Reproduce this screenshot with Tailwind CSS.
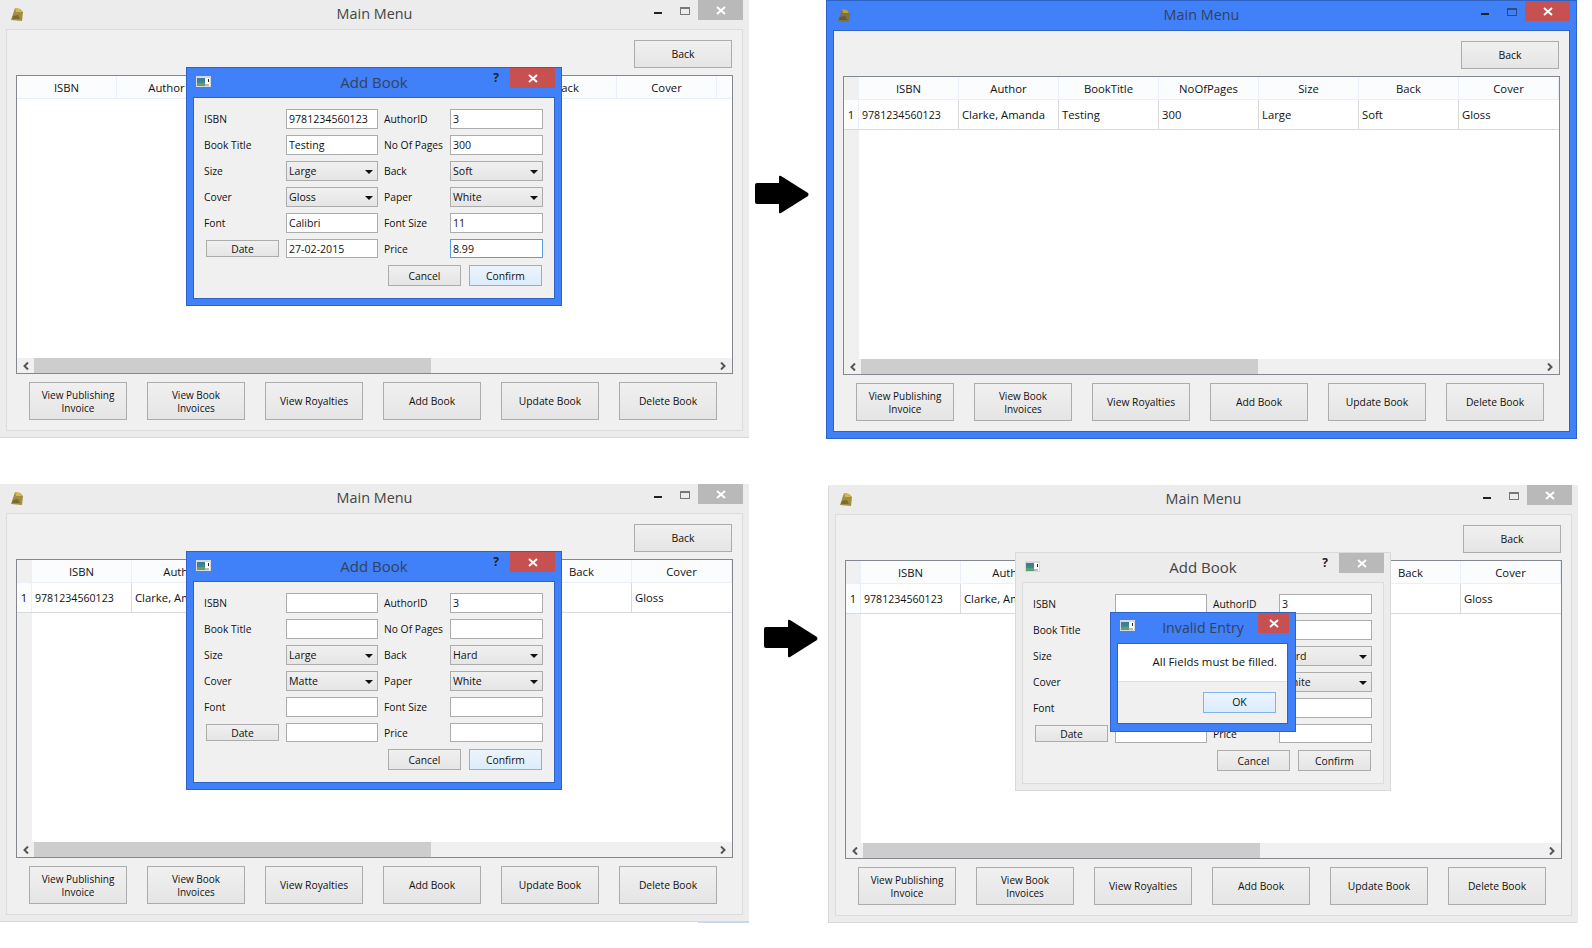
<!DOCTYPE html>
<html lang="en">
<head>
<meta charset="utf-8">
<title>Main Menu</title>
<script src="https://cdn.jsdelivr.net/npm/@tailwindcss/browser@4"></script>
</head>
<body class="bg-white">
<div class="relative w-[1592px] h-[948px] overflow-hidden font-['Open_Sans',sans-serif] text-[10.5px] text-[#111]">

<!-- WINDOW 1 -->
<div class="absolute left-0 top-0 w-[749px] h-[437px] bg-[#ececec] shadow-[0_1px_0_#d9d9d9]">
  <div class="relative h-[29px] flex items-start">
    <svg class="ml-[11px] mt-[8px]" width="12" height="13" viewBox="0 0 12 13"><polygon points="4,0 9,1 12,4 11,13 0,12 2,6" fill="#a38d40"/><polygon points="4,0 9,1 11,4 5,4" fill="#d4b84a"/><polygon points="2,8 7,7 9,11 1,11" fill="#7d6a30"/></svg>
    <div class="absolute inset-x-0 top-[3px] text-center text-[14.4px] text-[#444]">Main Menu</div>
    <div class="ml-auto mr-[6px] flex items-start">
      <div class="w-[8px] h-[2px] mt-[12px] bg-[#222]"></div>
      <div class="w-[10px] h-[8px] mt-[7px] ml-[18px] border border-[#777] border-t-2"></div>
      <div class="w-[45px] h-[20px] ml-[8px] bg-[#b9b9b9] flex items-center justify-center"><svg width="10" height="9" viewBox="0 0 10 9"><path d="M1 1l8 7M9 1l-8 7" stroke="#fff" stroke-width="2"/></svg></div>
    </div>
  </div>
  <div class="ml-[6px] w-[737px] h-[402px] border border-[#dcdcdc] bg-[#f0f0f0] flex flex-col pt-[10px]">
    <div class="flex justify-end pr-[10px]"><button class="w-[98px] h-[28px] pt-[2px] border border-[#acacac] bg-linear-to-b from-[#f0f0f0] to-[#e5e5e5]">Back</button></div>
    <div class="mx-[9px] mt-[7px] h-[299px] border border-[#828790] bg-white flex flex-col text-[11.3px]">
      <div class="h-[23px] flex bg-[#fbfcfe] border-b border-[#e9f0fb]">
        <div class="w-[100px] pt-[2px] border-r border-[#e9f0fb] flex items-center justify-center">ISBN</div>
        <div class="w-[100px] pt-[2px] border-r border-[#e9f0fb] flex items-center justify-center">Author</div>
        <div class="w-[100px] pt-[2px] border-r border-[#e9f0fb] flex items-center justify-center">BookTitle</div>
        <div class="w-[100px] pt-[2px] border-r border-[#e9f0fb] flex items-center justify-center">NoOfPages</div>
        <div class="w-[100px] pt-[2px] border-r border-[#e9f0fb] flex items-center justify-center">Size</div>
        <div class="w-[100px] pt-[2px] border-r border-[#e9f0fb] flex items-center justify-center">Back</div>
        <div class="w-[100px] pt-[2px] border-r border-[#e9f0fb] flex items-center justify-center">Cover</div>
      </div>
      <div class="flex-1"></div>
      <div class="h-[15px] flex bg-[#f0f0f0]">
        <div class="w-[17px] flex items-center justify-center"><svg width="6" height="8" viewBox="0 0 6 8"><path d="M5 0.5L1.5 4L5 7.5" fill="none" stroke="#555" stroke-width="2"/></svg></div>
        <div class="w-[397px] bg-[#cdcdcd]"></div>
        <div class="flex-1 flex items-center justify-end pr-[6px]"><svg width="6" height="8" viewBox="0 0 6 8"><path d="M1 0.5L4.500 4L1 7.5" fill="none" stroke="#555" stroke-width="2"/></svg></div>
      </div>
    </div>
    <div class="mt-[8px] pl-[22px] flex gap-[20px] text-[10.3px] [&>button]:pt-[2px]">
      <button class="w-[98px] h-[38px] text-[10px] leading-[13px] border border-[#acacac] bg-linear-to-b from-[#f0f0f0] to-[#e5e5e5]">View Publishing<br>Invoice</button>
      <button class="w-[98px] h-[38px] text-[10px] leading-[13px] border border-[#acacac] bg-linear-to-b from-[#f0f0f0] to-[#e5e5e5]">View Book<br>Invoices</button>
      <button class="w-[98px] h-[38px] border border-[#acacac] bg-linear-to-b from-[#f0f0f0] to-[#e5e5e5]">View Royalties</button>
      <button class="w-[98px] h-[38px] border border-[#acacac] bg-linear-to-b from-[#f0f0f0] to-[#e5e5e5]">Add Book</button>
      <button class="w-[98px] h-[38px] border border-[#acacac] bg-linear-to-b from-[#f0f0f0] to-[#e5e5e5]">Update Book</button>
      <button class="w-[98px] h-[38px] border border-[#acacac] bg-linear-to-b from-[#f0f0f0] to-[#e5e5e5]">Delete Book</button>
    </div>
  </div>
  <!-- dialog -->
  <div class="absolute left-[186px] top-[67px] w-[376px] h-[239px] bg-[#4080f8] border border-[#2e62c4]">
    <div class="relative h-[29px] flex items-start">
      <svg class="ml-[9px] mt-[8px]" width="15" height="11" viewBox="0 0 15 11"><rect width="15" height="11" fill="#d8d8d8"/><rect x="1" y="2" width="13" height="8" fill="#fff"/><rect x="1" y="2" width="8" height="3" fill="#3a7f95"/><rect x="1" y="5" width="8" height="2" fill="#3f8a86"/><rect x="1" y="7" width="8" height="3" fill="#5f9f78"/><rect x="12" y="3" width="1" height="3" fill="#222"/><rect x="9" y="8" width="4" height="2" fill="#bbb"/></svg>
      <div class="absolute inset-x-0 top-[3px] text-center text-[15px] text-[#33435c]">Add Book</div>
      <div class="ml-auto mr-[6px] flex items-start">
        <div class="mr-[11px] mt-[1px] text-[12px] font-bold text-[#222]">?</div>
        <div class="w-[45px] h-[20px] bg-[#c75050] flex items-center justify-center"><svg width="10" height="9" viewBox="0 0 10 9"><path d="M1 1l8 7M9 1l-8 7" stroke="#fff" stroke-width="2"/></svg></div>
      </div>
    </div>
    <div class="ml-[6px] w-[362px] h-[202px] border border-[#2e62c4] bg-[#f0f0f0] pt-[11px] pl-[10px] pr-[12px] text-[10.3px]">
      <div class="grid grid-cols-[82px_92px_72px_93px] auto-rows-[20px] gap-y-[6px] items-center [&>div]:pt-[2px]">
        <div>ISBN</div><div class="h-[20px] text-[10.6px] bg-white border border-[#acacac] pl-[2px] flex items-center">9781234560123</div><div class="pl-[6px]">AuthorID</div><div class="h-[20px] text-[10.6px] bg-white border border-[#acacac] pl-[2px] flex items-center">3</div>
        <div>Book Title</div><div class="h-[20px] text-[10.6px] bg-white border border-[#acacac] pl-[2px] flex items-center">Testing</div><div class="pl-[6px]">No Of Pages</div><div class="h-[20px] text-[10.6px] bg-white border border-[#acacac] pl-[2px] flex items-center">300</div>
        <div>Size</div><div class="h-[20px] text-[10.6px] border border-[#acacac] bg-linear-to-b from-[#f0f0f0] to-[#e5e5e5] pl-[2px] pr-[4px] flex items-center justify-between">Large<svg width="8" height="4" viewBox="0 0 8 4"><path d="M0 0h8L4 4z" fill="#111"/></svg></div><div class="pl-[6px]">Back</div><div class="h-[20px] text-[10.6px] border border-[#acacac] bg-linear-to-b from-[#f0f0f0] to-[#e5e5e5] pl-[2px] pr-[4px] flex items-center justify-between">Soft<svg width="8" height="4" viewBox="0 0 8 4"><path d="M0 0h8L4 4z" fill="#111"/></svg></div>
        <div>Cover</div><div class="h-[20px] text-[10.6px] border border-[#acacac] bg-linear-to-b from-[#f0f0f0] to-[#e5e5e5] pl-[2px] pr-[4px] flex items-center justify-between">Gloss<svg width="8" height="4" viewBox="0 0 8 4"><path d="M0 0h8L4 4z" fill="#111"/></svg></div><div class="pl-[6px]">Paper</div><div class="h-[20px] text-[10.6px] border border-[#acacac] bg-linear-to-b from-[#f0f0f0] to-[#e5e5e5] pl-[2px] pr-[4px] flex items-center justify-between">White<svg width="8" height="4" viewBox="0 0 8 4"><path d="M0 0h8L4 4z" fill="#111"/></svg></div>
        <div>Font</div><div class="h-[20px] text-[10.6px] bg-white border border-[#acacac] pl-[2px] flex items-center">Calibri</div><div class="pl-[6px]">Font Size</div><div class="h-[20px] text-[10.6px] bg-white border border-[#acacac] pl-[2px] flex items-center">11</div>
        <button class="ml-[2px] self-start mt-px pt-[2px] w-[73px] h-[17px] leading-[13px] border border-[#acacac] bg-linear-to-b from-[#f0f0f0] to-[#e5e5e5]">Date</button><div class="h-[19px] self-start text-[10.6px] bg-white border border-[#acacac] pl-[2px] flex items-center">27-02-2015</div><div class="pl-[6px]">Price</div><div class="h-[19px] self-start text-[10.6px] bg-white border border-[#569de5] pl-[2px] flex items-center">8.99</div>
      </div>
      <div class="mt-[6px] flex justify-end gap-[8px] [&>button]:pt-[2px]">
        <button class="w-[73px] h-[21px] border border-[#acacac] bg-linear-to-b from-[#f0f0f0] to-[#e5e5e5]">Cancel</button>
        <button class="w-[73px] h-[21px] border border-[#7eb4ea] bg-linear-to-b from-[#ecf4fc] to-[#dcecfc]">Confirm</button>
      </div>
    </div>
  </div>
</div>

<!-- ARROW 1 -->
<svg class="absolute left-[755px] top-[175px]" width="54" height="39" viewBox="0 0 54 39"><path d="M2 8H24V2Q24 0 26 1L53 18Q54 19.500 53 21L26 38Q24 39 24 37V29H2Q0 29 0 27V10Q0 8 2 8Z" fill="#000"/></svg>

<!-- WINDOW 2 -->
<div class="absolute left-[827px] top-px w-[749px] h-[437px] bg-[#4080f8] shadow-[0_0_0_1px_#2e62c4]">
  <div class="relative h-[29px] flex items-start">
    <svg class="ml-[11px] mt-[8px]" width="12" height="13" viewBox="0 0 12 13"><polygon points="4,0 9,1 12,4 11,13 0,12 2,6" fill="#7d7240"/><polygon points="4,0 9,1 11,4 5,4" fill="#b9a23f"/><polygon points="2,8 7,7 9,11 1,11" fill="#5f5a40"/></svg>
    <div class="absolute inset-x-0 top-[3px] text-center text-[14.4px] text-[#33435c]">Main Menu</div>
    <div class="ml-auto mr-[6px] flex items-start">
      <div class="w-[8px] h-[2px] mt-[12px] bg-[#222]"></div>
      <div class="w-[10px] h-[8px] mt-[7px] ml-[18px] border border-[#2e4a80] border-t-2"></div>
      <div class="w-[45px] h-[20px] ml-[8px] bg-[#c75050] flex items-center justify-center"><svg width="10" height="9" viewBox="0 0 10 9"><path d="M1 1l8 7M9 1l-8 7" stroke="#fff" stroke-width="2"/></svg></div>
    </div>
  </div>
  <div class="ml-[6px] w-[737px] h-[402px] border border-[#2e62c4] bg-[#f0f0f0] flex flex-col pt-[10px]">
    <div class="flex justify-end pr-[10px]"><button class="w-[98px] h-[28px] pt-[2px] border border-[#acacac] bg-linear-to-b from-[#f0f0f0] to-[#e5e5e5]">Back</button></div>
    <div class="mx-[9px] mt-[7px] h-[299px] border border-[#828790] bg-white flex flex-col text-[11.3px]">
      <div class="h-[23px] flex bg-[#fbfcfe] border-b border-[#e9f0fb]">
        <div class="w-[15px] border-r border-[#e9f0fb] bg-[#f0f0f0]"></div>
        <div class="w-[100px] pt-[2px] border-r border-[#e9f0fb] flex items-center justify-center">ISBN</div>
        <div class="w-[100px] pt-[2px] border-r border-[#e9f0fb] flex items-center justify-center">Author</div>
        <div class="w-[100px] pt-[2px] border-r border-[#e9f0fb] flex items-center justify-center">BookTitle</div>
        <div class="w-[100px] pt-[2px] border-r border-[#e9f0fb] flex items-center justify-center">NoOfPages</div>
        <div class="w-[100px] pt-[2px] border-r border-[#e9f0fb] flex items-center justify-center">Size</div>
        <div class="w-[100px] pt-[2px] border-r border-[#e9f0fb] flex items-center justify-center">Back</div>
        <div class="w-[100px] pt-[2px] border-r border-[#e9f0fb] flex items-center justify-center">Cover</div>
      </div>
      <div class="h-[30px] flex border-b border-[#d9d9d9]">
        <div class="w-[15px] pt-[2px] bg-[#fbfcfe] border-r border-[#e9f0fb] flex items-center justify-center">1</div>
        <div class="w-[100px] pt-[2px] text-[10.6px] border-r border-[#d9d9d9] pl-[3px] flex items-center">9781234560123</div>
        <div class="w-[100px] pt-[2px] border-r border-[#d9d9d9] pl-[3px] flex items-center">Clarke, Amanda</div>
        <div class="w-[100px] pt-[2px] border-r border-[#d9d9d9] pl-[3px] flex items-center">Testing</div>
        <div class="w-[100px] pt-[2px] border-r border-[#d9d9d9] pl-[3px] flex items-center">300</div>
        <div class="w-[100px] pt-[2px] border-r border-[#d9d9d9] pl-[3px] flex items-center">Large</div>
        <div class="w-[100px] pt-[2px] border-r border-[#d9d9d9] pl-[3px] flex items-center">Soft</div>
        <div class="w-[100px] pt-[2px] pl-[3px] flex items-center">Gloss</div>
      </div>
      <div class="flex-1 flex"><div class="w-[15px] bg-[#f0f0f0]"></div></div>
      <div class="h-[15px] flex bg-[#f0f0f0]">
        <div class="w-[17px] flex items-center justify-center"><svg width="6" height="8" viewBox="0 0 6 8"><path d="M5 0.5L1.5 4L5 7.5" fill="none" stroke="#555" stroke-width="2"/></svg></div>
        <div class="w-[397px] bg-[#cdcdcd]"></div>
        <div class="flex-1 flex items-center justify-end pr-[6px]"><svg width="6" height="8" viewBox="0 0 6 8"><path d="M1 0.5L4.500 4L1 7.5" fill="none" stroke="#555" stroke-width="2"/></svg></div>
      </div>
    </div>
    <div class="mt-[8px] pl-[22px] flex gap-[20px] text-[10.3px] [&>button]:pt-[2px]">
      <button class="w-[98px] h-[38px] text-[10px] leading-[13px] border border-[#acacac] bg-linear-to-b from-[#f0f0f0] to-[#e5e5e5]">View Publishing<br>Invoice</button>
      <button class="w-[98px] h-[38px] text-[10px] leading-[13px] border border-[#acacac] bg-linear-to-b from-[#f0f0f0] to-[#e5e5e5]">View Book<br>Invoices</button>
      <button class="w-[98px] h-[38px] border border-[#acacac] bg-linear-to-b from-[#f0f0f0] to-[#e5e5e5]">View Royalties</button>
      <button class="w-[98px] h-[38px] border border-[#acacac] bg-linear-to-b from-[#f0f0f0] to-[#e5e5e5]">Add Book</button>
      <button class="w-[98px] h-[38px] border border-[#acacac] bg-linear-to-b from-[#f0f0f0] to-[#e5e5e5]">Update Book</button>
      <button class="w-[98px] h-[38px] border border-[#acacac] bg-linear-to-b from-[#f0f0f0] to-[#e5e5e5]">Delete Book</button>
    </div>
  </div>
</div>

<!-- WINDOW 3 -->
<div class="absolute left-0 top-[484px] w-[749px] h-[437px] bg-[#ececec] shadow-[0_1px_0_#d9d9d9]">
  <div class="relative h-[29px] flex items-start">
    <svg class="ml-[11px] mt-[8px]" width="12" height="13" viewBox="0 0 12 13"><polygon points="4,0 9,1 12,4 11,13 0,12 2,6" fill="#a38d40"/><polygon points="4,0 9,1 11,4 5,4" fill="#d4b84a"/><polygon points="2,8 7,7 9,11 1,11" fill="#7d6a30"/></svg>
    <div class="absolute inset-x-0 top-[3px] text-center text-[14.4px] text-[#444]">Main Menu</div>
    <div class="ml-auto mr-[6px] flex items-start">
      <div class="w-[8px] h-[2px] mt-[12px] bg-[#222]"></div>
      <div class="w-[10px] h-[8px] mt-[7px] ml-[18px] border border-[#777] border-t-2"></div>
      <div class="w-[45px] h-[20px] ml-[8px] bg-[#b9b9b9] flex items-center justify-center"><svg width="10" height="9" viewBox="0 0 10 9"><path d="M1 1l8 7M9 1l-8 7" stroke="#fff" stroke-width="2"/></svg></div>
    </div>
  </div>
  <div class="ml-[6px] w-[737px] h-[402px] border border-[#dcdcdc] bg-[#f0f0f0] flex flex-col pt-[10px]">
    <div class="flex justify-end pr-[10px]"><button class="w-[98px] h-[28px] pt-[2px] border border-[#acacac] bg-linear-to-b from-[#f0f0f0] to-[#e5e5e5]">Back</button></div>
    <div class="mx-[9px] mt-[7px] h-[299px] border border-[#828790] bg-white flex flex-col text-[11.3px]">
      <div class="h-[23px] flex bg-[#fbfcfe] border-b border-[#e9f0fb]">
        <div class="w-[15px] border-r border-[#e9f0fb] bg-[#f0f0f0]"></div>
        <div class="w-[100px] pt-[2px] border-r border-[#e9f0fb] flex items-center justify-center">ISBN</div>
        <div class="w-[100px] pt-[2px] border-r border-[#e9f0fb] flex items-center justify-center">Author</div>
        <div class="w-[100px] pt-[2px] border-r border-[#e9f0fb] flex items-center justify-center">BookTitle</div>
        <div class="w-[100px] pt-[2px] border-r border-[#e9f0fb] flex items-center justify-center">NoOfPages</div>
        <div class="w-[100px] pt-[2px] border-r border-[#e9f0fb] flex items-center justify-center">Size</div>
        <div class="w-[100px] pt-[2px] border-r border-[#e9f0fb] flex items-center justify-center">Back</div>
        <div class="w-[100px] pt-[2px] border-r border-[#e9f0fb] flex items-center justify-center">Cover</div>
      </div>
      <div class="h-[30px] flex border-b border-[#d9d9d9]">
        <div class="w-[15px] pt-[2px] bg-[#fbfcfe] border-r border-[#e9f0fb] flex items-center justify-center">1</div>
        <div class="w-[100px] pt-[2px] text-[10.6px] border-r border-[#d9d9d9] pl-[3px] flex items-center">9781234560123</div>
        <div class="w-[100px] pt-[2px] border-r border-[#d9d9d9] pl-[3px] flex items-center">Clarke, Amanda</div>
        <div class="w-[100px] pt-[2px] border-r border-[#d9d9d9] pl-[3px] flex items-center">Testing</div>
        <div class="w-[100px] pt-[2px] border-r border-[#d9d9d9] pl-[3px] flex items-center">300</div>
        <div class="w-[100px] pt-[2px] border-r border-[#d9d9d9] pl-[3px] flex items-center">Large</div>
        <div class="w-[100px] pt-[2px] border-r border-[#d9d9d9] pl-[3px] flex items-center">Soft</div>
        <div class="w-[100px] pt-[2px] pl-[3px] flex items-center">Gloss</div>
      </div>
      <div class="flex-1 flex"><div class="w-[15px] bg-[#f0f0f0]"></div></div>
      <div class="h-[15px] flex bg-[#f0f0f0]">
        <div class="w-[17px] flex items-center justify-center"><svg width="6" height="8" viewBox="0 0 6 8"><path d="M5 0.5L1.5 4L5 7.5" fill="none" stroke="#555" stroke-width="2"/></svg></div>
        <div class="w-[397px] bg-[#cdcdcd]"></div>
        <div class="flex-1 flex items-center justify-end pr-[6px]"><svg width="6" height="8" viewBox="0 0 6 8"><path d="M1 0.5L4.500 4L1 7.5" fill="none" stroke="#555" stroke-width="2"/></svg></div>
      </div>
    </div>
    <div class="mt-[8px] pl-[22px] flex gap-[20px] text-[10.3px] [&>button]:pt-[2px]">
      <button class="w-[98px] h-[38px] text-[10px] leading-[13px] border border-[#acacac] bg-linear-to-b from-[#f0f0f0] to-[#e5e5e5]">View Publishing<br>Invoice</button>
      <button class="w-[98px] h-[38px] text-[10px] leading-[13px] border border-[#acacac] bg-linear-to-b from-[#f0f0f0] to-[#e5e5e5]">View Book<br>Invoices</button>
      <button class="w-[98px] h-[38px] border border-[#acacac] bg-linear-to-b from-[#f0f0f0] to-[#e5e5e5]">View Royalties</button>
      <button class="w-[98px] h-[38px] border border-[#acacac] bg-linear-to-b from-[#f0f0f0] to-[#e5e5e5]">Add Book</button>
      <button class="w-[98px] h-[38px] border border-[#acacac] bg-linear-to-b from-[#f0f0f0] to-[#e5e5e5]">Update Book</button>
      <button class="w-[98px] h-[38px] border border-[#acacac] bg-linear-to-b from-[#f0f0f0] to-[#e5e5e5]">Delete Book</button>
    </div>
  </div>
  <!-- dialog -->
  <div class="absolute left-[186px] top-[67px] w-[376px] h-[239px] bg-[#4080f8] border border-[#2e62c4]">
    <div class="relative h-[29px] flex items-start">
      <svg class="ml-[9px] mt-[8px]" width="15" height="11" viewBox="0 0 15 11"><rect width="15" height="11" fill="#d8d8d8"/><rect x="1" y="2" width="13" height="8" fill="#fff"/><rect x="1" y="2" width="8" height="3" fill="#3a7f95"/><rect x="1" y="5" width="8" height="2" fill="#3f8a86"/><rect x="1" y="7" width="8" height="3" fill="#5f9f78"/><rect x="12" y="3" width="1" height="3" fill="#222"/><rect x="9" y="8" width="4" height="2" fill="#bbb"/></svg>
      <div class="absolute inset-x-0 top-[3px] text-center text-[15px] text-[#33435c]">Add Book</div>
      <div class="ml-auto mr-[6px] flex items-start">
        <div class="mr-[11px] mt-[1px] text-[12px] font-bold text-[#222]">?</div>
        <div class="w-[45px] h-[20px] bg-[#c75050] flex items-center justify-center"><svg width="10" height="9" viewBox="0 0 10 9"><path d="M1 1l8 7M9 1l-8 7" stroke="#fff" stroke-width="2"/></svg></div>
      </div>
    </div>
    <div class="ml-[6px] w-[362px] h-[202px] border border-[#2e62c4] bg-[#f0f0f0] pt-[11px] pl-[10px] pr-[12px] text-[10.3px]">
      <div class="grid grid-cols-[82px_92px_72px_93px] auto-rows-[20px] gap-y-[6px] items-center [&>div]:pt-[2px]">
        <div>ISBN</div><div class="h-[20px] bg-white border border-[#acacac]"></div><div class="pl-[6px]">AuthorID</div><div class="h-[20px] text-[10.6px] bg-white border border-[#acacac] pl-[2px] flex items-center">3</div>
        <div>Book Title</div><div class="h-[20px] bg-white border border-[#acacac]"></div><div class="pl-[6px]">No Of Pages</div><div class="h-[20px] bg-white border border-[#acacac]"></div>
        <div>Size</div><div class="h-[20px] text-[10.6px] border border-[#acacac] bg-linear-to-b from-[#f0f0f0] to-[#e5e5e5] pl-[2px] pr-[4px] flex items-center justify-between">Large<svg width="8" height="4" viewBox="0 0 8 4"><path d="M0 0h8L4 4z" fill="#111"/></svg></div><div class="pl-[6px]">Back</div><div class="h-[20px] text-[10.6px] border border-[#acacac] bg-linear-to-b from-[#f0f0f0] to-[#e5e5e5] pl-[2px] pr-[4px] flex items-center justify-between">Hard<svg width="8" height="4" viewBox="0 0 8 4"><path d="M0 0h8L4 4z" fill="#111"/></svg></div>
        <div>Cover</div><div class="h-[20px] text-[10.6px] border border-[#acacac] bg-linear-to-b from-[#f0f0f0] to-[#e5e5e5] pl-[2px] pr-[4px] flex items-center justify-between">Matte<svg width="8" height="4" viewBox="0 0 8 4"><path d="M0 0h8L4 4z" fill="#111"/></svg></div><div class="pl-[6px]">Paper</div><div class="h-[20px] text-[10.6px] border border-[#acacac] bg-linear-to-b from-[#f0f0f0] to-[#e5e5e5] pl-[2px] pr-[4px] flex items-center justify-between">White<svg width="8" height="4" viewBox="0 0 8 4"><path d="M0 0h8L4 4z" fill="#111"/></svg></div>
        <div>Font</div><div class="h-[20px] bg-white border border-[#acacac]"></div><div class="pl-[6px]">Font Size</div><div class="h-[20px] bg-white border border-[#acacac]"></div>
        <button class="ml-[2px] self-start mt-px pt-[2px] w-[73px] h-[17px] leading-[13px] border border-[#acacac] bg-linear-to-b from-[#f0f0f0] to-[#e5e5e5]">Date</button><div class="h-[19px] self-start bg-white border border-[#acacac]"></div><div class="pl-[6px]">Price</div><div class="h-[19px] self-start bg-white border border-[#acacac]"></div>
      </div>
      <div class="mt-[6px] flex justify-end gap-[8px] [&>button]:pt-[2px]">
        <button class="w-[73px] h-[21px] border border-[#acacac] bg-linear-to-b from-[#f0f0f0] to-[#e5e5e5]">Cancel</button>
        <button class="w-[73px] h-[21px] border border-[#7eb4ea] bg-linear-to-b from-[#ecf4fc] to-[#dcecfc]">Confirm</button>
      </div>
    </div>
  </div>
</div>
<div class="absolute left-[698px] top-[922px] w-[51px] h-px bg-[#c9d9ea]"></div>

<!-- ARROW 2 -->
<svg class="absolute left-[764px] top-[619px]" width="54" height="39" viewBox="0 0 54 39"><path d="M2 8H24V2Q24 0 26 1L53 18Q54 19.500 53 21L26 38Q24 39 24 37V29H2Q0 29 0 27V10Q0 8 2 8Z" fill="#000"/></svg>

<!-- WINDOW 4 -->
<div class="absolute left-[829px] top-[485px] w-[749px] h-[437px] bg-[#ececec] shadow-[-1px_1px_0_#d9d9d9]">
  <div class="relative h-[29px] flex items-start">
    <svg class="ml-[11px] mt-[8px]" width="12" height="13" viewBox="0 0 12 13"><polygon points="4,0 9,1 12,4 11,13 0,12 2,6" fill="#a38d40"/><polygon points="4,0 9,1 11,4 5,4" fill="#d4b84a"/><polygon points="2,8 7,7 9,11 1,11" fill="#7d6a30"/></svg>
    <div class="absolute inset-x-0 top-[3px] text-center text-[14.4px] text-[#444]">Main Menu</div>
    <div class="ml-auto mr-[6px] flex items-start">
      <div class="w-[8px] h-[2px] mt-[12px] bg-[#222]"></div>
      <div class="w-[10px] h-[8px] mt-[7px] ml-[18px] border border-[#777] border-t-2"></div>
      <div class="w-[45px] h-[20px] ml-[8px] bg-[#b9b9b9] flex items-center justify-center"><svg width="10" height="9" viewBox="0 0 10 9"><path d="M1 1l8 7M9 1l-8 7" stroke="#fff" stroke-width="2"/></svg></div>
    </div>
  </div>
  <div class="ml-[6px] w-[737px] h-[402px] border border-[#dcdcdc] bg-[#f0f0f0] flex flex-col pt-[10px]">
    <div class="flex justify-end pr-[10px]"><button class="w-[98px] h-[28px] pt-[2px] border border-[#acacac] bg-linear-to-b from-[#f0f0f0] to-[#e5e5e5]">Back</button></div>
    <div class="mx-[9px] mt-[7px] h-[299px] border border-[#828790] bg-white flex flex-col text-[11.3px]">
      <div class="h-[23px] flex bg-[#fbfcfe] border-b border-[#e9f0fb]">
        <div class="w-[15px] border-r border-[#e9f0fb] bg-[#f0f0f0]"></div>
        <div class="w-[100px] pt-[2px] border-r border-[#e9f0fb] flex items-center justify-center">ISBN</div>
        <div class="w-[100px] pt-[2px] border-r border-[#e9f0fb] flex items-center justify-center">Author</div>
        <div class="w-[100px] pt-[2px] border-r border-[#e9f0fb] flex items-center justify-center">BookTitle</div>
        <div class="w-[100px] pt-[2px] border-r border-[#e9f0fb] flex items-center justify-center">NoOfPages</div>
        <div class="w-[100px] pt-[2px] border-r border-[#e9f0fb] flex items-center justify-center">Size</div>
        <div class="w-[100px] pt-[2px] border-r border-[#e9f0fb] flex items-center justify-center">Back</div>
        <div class="w-[100px] pt-[2px] border-r border-[#e9f0fb] flex items-center justify-center">Cover</div>
      </div>
      <div class="h-[30px] flex border-b border-[#d9d9d9]">
        <div class="w-[15px] pt-[2px] bg-[#fbfcfe] border-r border-[#e9f0fb] flex items-center justify-center">1</div>
        <div class="w-[100px] pt-[2px] text-[10.6px] border-r border-[#d9d9d9] pl-[3px] flex items-center">9781234560123</div>
        <div class="w-[100px] pt-[2px] border-r border-[#d9d9d9] pl-[3px] flex items-center">Clarke, Amanda</div>
        <div class="w-[100px] pt-[2px] border-r border-[#d9d9d9] pl-[3px] flex items-center">Testing</div>
        <div class="w-[100px] pt-[2px] border-r border-[#d9d9d9] pl-[3px] flex items-center">300</div>
        <div class="w-[100px] pt-[2px] border-r border-[#d9d9d9] pl-[3px] flex items-center">Large</div>
        <div class="w-[100px] pt-[2px] border-r border-[#d9d9d9] pl-[3px] flex items-center">Soft</div>
        <div class="w-[100px] pt-[2px] pl-[3px] flex items-center">Gloss</div>
      </div>
      <div class="flex-1 flex"><div class="w-[15px] bg-[#f0f0f0]"></div></div>
      <div class="h-[15px] flex bg-[#f0f0f0]">
        <div class="w-[17px] flex items-center justify-center"><svg width="6" height="8" viewBox="0 0 6 8"><path d="M5 0.5L1.5 4L5 7.5" fill="none" stroke="#555" stroke-width="2"/></svg></div>
        <div class="w-[397px] bg-[#cdcdcd]"></div>
        <div class="flex-1 flex items-center justify-end pr-[6px]"><svg width="6" height="8" viewBox="0 0 6 8"><path d="M1 0.5L4.500 4L1 7.5" fill="none" stroke="#555" stroke-width="2"/></svg></div>
      </div>
    </div>
    <div class="mt-[8px] pl-[22px] flex gap-[20px] text-[10.3px] [&>button]:pt-[2px]">
      <button class="w-[98px] h-[38px] text-[10px] leading-[13px] border border-[#acacac] bg-linear-to-b from-[#f0f0f0] to-[#e5e5e5]">View Publishing<br>Invoice</button>
      <button class="w-[98px] h-[38px] text-[10px] leading-[13px] border border-[#acacac] bg-linear-to-b from-[#f0f0f0] to-[#e5e5e5]">View Book<br>Invoices</button>
      <button class="w-[98px] h-[38px] border border-[#acacac] bg-linear-to-b from-[#f0f0f0] to-[#e5e5e5]">View Royalties</button>
      <button class="w-[98px] h-[38px] border border-[#acacac] bg-linear-to-b from-[#f0f0f0] to-[#e5e5e5]">Add Book</button>
      <button class="w-[98px] h-[38px] border border-[#acacac] bg-linear-to-b from-[#f0f0f0] to-[#e5e5e5]">Update Book</button>
      <button class="w-[98px] h-[38px] border border-[#acacac] bg-linear-to-b from-[#f0f0f0] to-[#e5e5e5]">Delete Book</button>
    </div>
  </div>
  <!-- unfocused dialog -->
  <div class="absolute left-[186px] top-[67px] w-[376px] h-[239px] bg-[#ececec] border border-[#d9d9d9]">
    <div class="relative h-[29px] flex items-start">
      <svg class="ml-[9px] mt-[8px]" width="15" height="11" viewBox="0 0 15 11"><rect width="15" height="11" fill="#d8d8d8"/><rect x="1" y="2" width="13" height="8" fill="#fff"/><rect x="1" y="2" width="8" height="3" fill="#3a7f95"/><rect x="1" y="5" width="8" height="2" fill="#3f8a86"/><rect x="1" y="7" width="8" height="3" fill="#5f9f78"/><rect x="12" y="3" width="1" height="3" fill="#222"/><rect x="9" y="8" width="4" height="2" fill="#bbb"/></svg>
      <div class="absolute inset-x-0 top-[3px] text-center text-[15px] text-[#444]">Add Book</div>
      <div class="ml-auto mr-[6px] flex items-start">
        <div class="mr-[11px] mt-[1px] text-[12px] font-bold text-[#222]">?</div>
        <div class="w-[45px] h-[20px] bg-[#b9b9b9] flex items-center justify-center"><svg width="10" height="9" viewBox="0 0 10 9"><path d="M1 1l8 7M9 1l-8 7" stroke="#fff" stroke-width="2"/></svg></div>
      </div>
    </div>
    <div class="ml-[6px] w-[362px] h-[202px] border border-[#dcdcdc] bg-[#f0f0f0] pt-[11px] pl-[10px] pr-[12px] text-[10.3px]">
      <div class="grid grid-cols-[82px_92px_72px_93px] auto-rows-[20px] gap-y-[6px] items-center [&>div]:pt-[2px]">
        <div>ISBN</div><div class="h-[20px] bg-white border border-[#acacac]"></div><div class="pl-[6px]">AuthorID</div><div class="h-[20px] text-[10.6px] bg-white border border-[#acacac] pl-[2px] flex items-center">3</div>
        <div>Book Title</div><div class="h-[20px] bg-white border border-[#acacac]"></div><div class="pl-[6px]">No Of Pages</div><div class="h-[20px] bg-white border border-[#acacac]"></div>
        <div>Size</div><div class="h-[20px] text-[10.6px] border border-[#acacac] bg-linear-to-b from-[#f0f0f0] to-[#e5e5e5] pl-[2px] pr-[4px] flex items-center justify-between">Large<svg width="8" height="4" viewBox="0 0 8 4"><path d="M0 0h8L4 4z" fill="#111"/></svg></div><div class="pl-[6px]">Back</div><div class="h-[20px] text-[10.6px] border border-[#acacac] bg-linear-to-b from-[#f0f0f0] to-[#e5e5e5] pl-[2px] pr-[4px] flex items-center justify-between">Hard<svg width="8" height="4" viewBox="0 0 8 4"><path d="M0 0h8L4 4z" fill="#111"/></svg></div>
        <div>Cover</div><div class="h-[20px] text-[10.6px] border border-[#acacac] bg-linear-to-b from-[#f0f0f0] to-[#e5e5e5] pl-[2px] pr-[4px] flex items-center justify-between">Matte<svg width="8" height="4" viewBox="0 0 8 4"><path d="M0 0h8L4 4z" fill="#111"/></svg></div><div class="pl-[6px]">Paper</div><div class="h-[20px] text-[10.6px] border border-[#acacac] bg-linear-to-b from-[#f0f0f0] to-[#e5e5e5] pl-[2px] pr-[4px] flex items-center justify-between">White<svg width="8" height="4" viewBox="0 0 8 4"><path d="M0 0h8L4 4z" fill="#111"/></svg></div>
        <div>Font</div><div class="h-[20px] bg-white border border-[#acacac]"></div><div class="pl-[6px]">Font Size</div><div class="h-[20px] bg-white border border-[#acacac]"></div>
        <button class="ml-[2px] self-start mt-px pt-[2px] w-[73px] h-[17px] leading-[13px] border border-[#acacac] bg-linear-to-b from-[#f0f0f0] to-[#e5e5e5]">Date</button><div class="h-[19px] self-start bg-white border border-[#acacac]"></div><div class="pl-[6px]">Price</div><div class="h-[19px] self-start bg-white border border-[#acacac]"></div>
      </div>
      <div class="mt-[6px] flex justify-end gap-[8px] [&>button]:pt-[2px]">
        <button class="w-[73px] h-[21px] border border-[#acacac] bg-linear-to-b from-[#f0f0f0] to-[#e5e5e5]">Cancel</button>
        <button class="w-[73px] h-[21px] border border-[#acacac] bg-linear-to-b from-[#f0f0f0] to-[#e5e5e5]">Confirm</button>
      </div>
    </div>
  </div>
  <!-- invalid entry -->
  <div class="absolute left-[281px] top-[127px] w-[186px] h-[120px] bg-[#4080f8] border border-[#2e62c4]">
    <div class="relative h-[30px] flex items-start">
      <svg class="ml-[9px] mt-[7px]" width="15" height="11" viewBox="0 0 15 11"><rect width="15" height="11" fill="#d8d8d8"/><rect x="1" y="2" width="13" height="8" fill="#fff"/><rect x="1" y="2" width="8" height="3" fill="#3a7f95"/><rect x="1" y="5" width="8" height="2" fill="#3f8a86"/><rect x="1" y="7" width="8" height="3" fill="#5f9f78"/><rect x="12" y="3" width="1" height="3" fill="#222"/><rect x="9" y="8" width="4" height="2" fill="#bbb"/></svg>
      <div class="absolute inset-x-0 top-[4px] text-center text-[14.2px] text-[#33435c]">Invalid Entry</div>
      <div class="ml-auto mr-[6px] w-[31px] h-[20px] bg-[#c75050] flex items-center justify-center"><svg width="10" height="9" viewBox="0 0 10 9"><path d="M1 1l8 7M9 1l-8 7" stroke="#fff" stroke-width="2"/></svg></div>
    </div>
    <div class="ml-[6px] w-[171px] h-[81px] border border-[#2e62c4] bg-[#f0f0f0] flex flex-col">
      <div class="h-[38px] pb-[2px] text-[11.4px] bg-white border-b border-[#dfdfdf] flex items-center justify-end pr-[10px]">All Fields must be filled.</div>
      <div class="flex-1 flex items-center justify-end pr-[11px]"><button class="w-[73px] h-[21px] border border-[#7eb4ea] bg-linear-to-b from-[#ecf4fc] to-[#dcecfc]">OK</button></div>
    </div>
  </div>
</div>

</div>
</body>
</html>
